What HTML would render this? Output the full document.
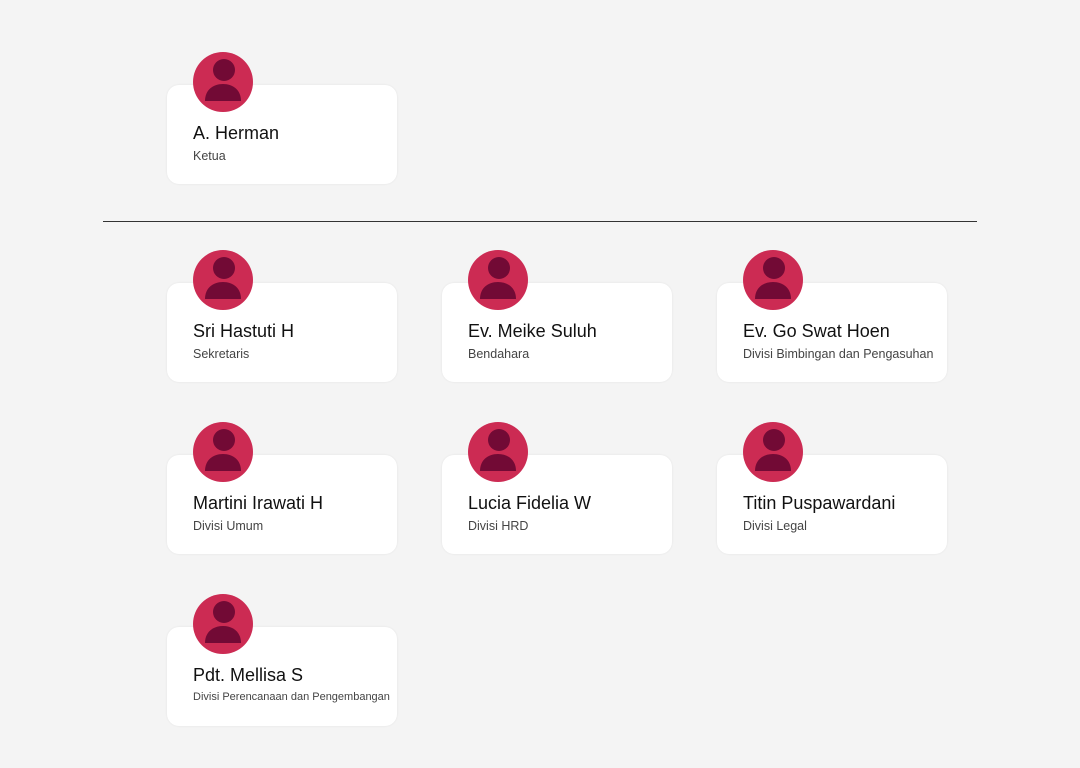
<!DOCTYPE html><html><head><style>
body{margin:0;width:1080px;height:768px;background:#f4f4f4;font-family:"Liberation Sans",sans-serif;position:relative;overflow:hidden}
.c{position:absolute;width:230px;height:99px;background:#fff;border-radius:12px;box-shadow:0 0 2px rgba(0,0,0,.08)}
.a{position:absolute;left:26px;top:-33px;width:60px;height:60px}
.n{position:absolute;left:26px;top:38px;font-size:18px;color:#111}
.r{position:absolute;left:26px;top:64px;font-size:12.5px;color:#444;white-space:nowrap}
.l{position:absolute;left:103px;top:221px;width:874px;height:1px;background:#333}
</style></head><body>
<div class="l"></div>
<svg width="0" height="0" style="position:absolute"><defs><g id="av"><circle cx="30" cy="30" r="30" fill="#cc2b53"/><circle cx="31" cy="18" r="11" fill="#720a35"/><path d="M12 49 C12 38 20 32 30 32 C40 32 48 38 48 49 Z" fill="#720a35"/></g></defs></svg>
<div class="c" style="left:167px;top:85px"><svg class="a"><use href="#av"/></svg><div class="n">A. Herman</div><div class="r">Ketua</div></div>
<div class="c" style="left:167px;top:283px"><svg class="a"><use href="#av"/></svg><div class="n">Sri Hastuti H</div><div class="r">Sekretaris</div></div>
<div class="c" style="left:442px;top:283px"><svg class="a"><use href="#av"/></svg><div class="n">Ev. Meike Suluh</div><div class="r">Bendahara</div></div>
<div class="c" style="left:717px;top:283px"><svg class="a"><use href="#av"/></svg><div class="n">Ev. Go Swat Hoen</div><div class="r">Divisi Bimbingan dan Pengasuhan</div></div>
<div class="c" style="left:167px;top:455px"><svg class="a"><use href="#av"/></svg><div class="n">Martini Irawati H</div><div class="r">Divisi Umum</div></div>
<div class="c" style="left:442px;top:455px"><svg class="a"><use href="#av"/></svg><div class="n">Lucia Fidelia W</div><div class="r">Divisi HRD</div></div>
<div class="c" style="left:717px;top:455px"><svg class="a"><use href="#av"/></svg><div class="n">Titin Puspawardani</div><div class="r">Divisi Legal</div></div>
<div class="c" style="left:167px;top:627px"><svg class="a"><use href="#av"/></svg><div class="n">Pdt. Mellisa S</div><div class="r" style="font-size:11px">Divisi Perencanaan dan Pengembangan</div></div>
</body></html>
